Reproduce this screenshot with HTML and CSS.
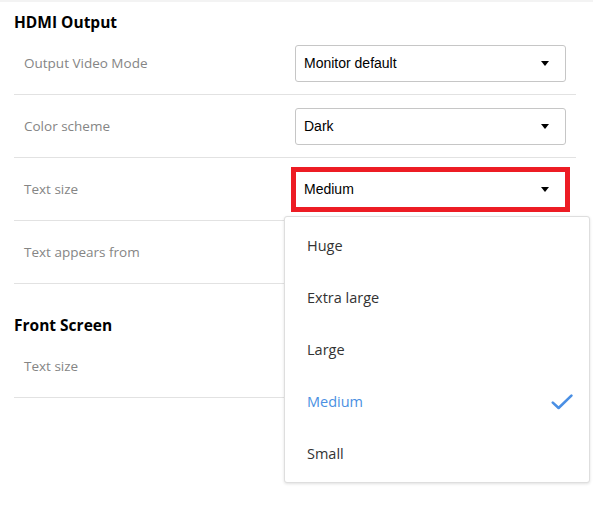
FILE: index.html
```html
<!DOCTYPE html>
<html>
<head>
<meta charset="utf-8">
<link rel="stylesheet" href="styles.css">
</head>
<body>
<div class="topline"></div>
<div class="page">
  <section class="section">
    <h2 class="heading">HDMI Output</h2>
    <div class="row">
      <span class="label">Output Video Mode</span>
      <div class="select"><span class="value">Monitor default</span><span class="arrow"></span></div>
    </div>
    <div class="row">
      <span class="label">Color scheme</span>
      <div class="select"><span class="value">Dark</span><span class="arrow"></span></div>
    </div>
    <div class="row">
      <span class="label">Text size</span>
      <div class="select-wrap">
        <div class="select highlight"><span class="value">Medium</span><span class="arrow"></span></div>
        <ul class="menu">
          <li class="item">Huge</li>
          <li class="item">Extra large</li>
          <li class="item">Large</li>
          <li class="item selected">Medium
            <svg class="check" width="22" height="16" viewBox="0 0 22 16"><path d="M1.8 8.6 L7.6 14 L20.4 1.6" fill="none" stroke="#4a8fe4" stroke-width="2.6" stroke-linecap="round" stroke-linejoin="round"/></svg>
          </li>
          <li class="item">Small</li>
        </ul>
      </div>
    </div>
    <div class="row">
      <span class="label">Text appears from</span>
    </div>
  </section>
  <section class="section second">
    <h2 class="heading">Front Screen</h2>
    <div class="row">
      <span class="label">Text size</span>
    </div>
  </section>
</div>
</body>
</html>
```
FILE: styles.css
```css
html, body {
  margin: 0;
  padding: 0;
  background: #fff;
}
body {
  min-height: 511px;
  font-family: "Open Sans", "Noto Sans", sans-serif;
  color: #222;
}
.topline {
  height: 2px;
  background: #f3f3f3;
}
.page {
  margin: 0 17px 0 14px;
  min-height: 509px;
}
.section.second {
  margin-top: 21px;
}
.heading {
  margin: 0;
  padding-top: 10px;
  height: 20px;
  line-height: 20px;
  font-size: 15.5px;
  font-weight: 700;
  color: #000;
}
.row {
  height: 62px;
  border-bottom: 1px solid #e2e2e2;
  display: flex;
  align-items: center;
  justify-content: space-between;
  padding: 0 10px;
}
.label {
  font-size: 13.5px;
  color: #858585;
}
.select-wrap {
  position: relative;
}
.select {
  box-sizing: border-box;
  width: 271px;
  height: 37px;
  border: 1px solid #c6c6c6;
  border-radius: 3px;
  display: flex;
  align-items: center;
  justify-content: space-between;
  padding: 0 16px 0 8px;
  font-family: "Liberation Sans", Arial, sans-serif;
  font-size: 14px;
  color: #000;
  background: #fff;
}
.arrow {
  width: 0;
  height: 0;
  border-left: 4.5px solid transparent;
  border-right: 4.5px solid transparent;
  border-top: 5px solid #000;
}
.select.highlight {
  border-color: #ed1c24;
  outline: 4px solid #ed1c24;
  border-radius: 0;
}
.menu {
  position: absolute;
  left: -11px;
  top: 45px;
  width: 306px;
  box-sizing: border-box;
  margin: 0;
  padding: 3px 0 2px;
  list-style: none;
  background: #fff;
  border: 1px solid #dedede;
  border-radius: 3px;
  box-shadow: 0 1px 3px rgba(0, 0, 0, 0.12);
  z-index: 2;
}
.item {
  height: 52px;
  display: flex;
  align-items: center;
  justify-content: space-between;
  padding: 0 16px 0 22px;
  font-size: 14.5px;
  color: #333;
}
.item.selected {
  color: #4a90e2;
}
.check {
  display: block;
}
```
